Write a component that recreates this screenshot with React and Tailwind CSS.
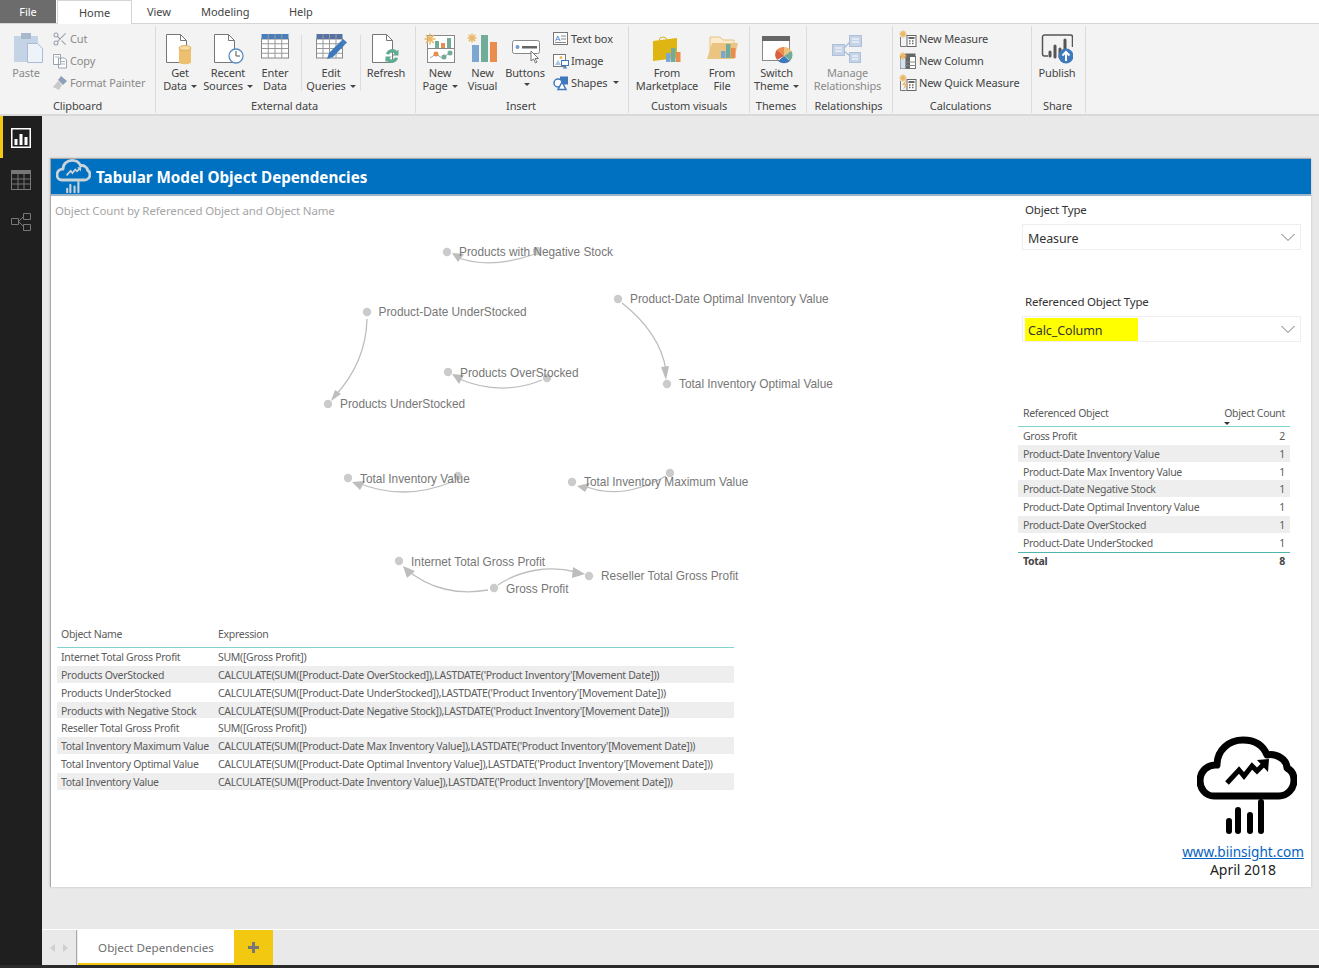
import { Scissors } from 'lucide-react';

const nodes = [
  { x: 447, y: 252, label: 'Products with Negative Stock', lx: 459, ly: 256 },
  { x: 537, y: 251 },
  { x: 367, y: 312, label: 'Product-Date UnderStocked', lx: 378.5, ly: 316 },
  { x: 328, y: 404, label: 'Products UnderStocked', lx: 340, ly: 408 },
  { x: 448, y: 372, label: 'Products OverStocked', lx: 460, ly: 377 },
  { x: 547, y: 378 },
  { x: 618, y: 299, label: 'Product-Date Optimal Inventory Value', lx: 630, ly: 303 },
  { x: 667, y: 384, label: 'Total Inventory Optimal Value', lx: 679, ly: 388 },
  { x: 348, y: 478, label: 'Total Inventory Value', lx: 360, ly: 483 },
  { x: 458, y: 476 },
  { x: 572, y: 482, label: 'Total Inventory Maximum Value', lx: 584, ly: 486 },
  { x: 670, y: 473 },
  { x: 399, y: 561, label: 'Internet Total Gross Profit', lx: 411, ly: 566 },
  { x: 589, y: 576, label: 'Reseller Total Gross Profit', lx: 601, ly: 580 },
  { x: 494, y: 588, label: 'Gross Profit', lx: 506, ly: 593 },
];

const edges = [
  { d: 'M535 254 Q490 270 456 257', head: '452,253 464,254 458,262' },
  { d: 'M367 319 Q366 362 335 396', head: '331,401 341,394 335,390' },
  { d: 'M542 380 Q500 397 457 378', head: '452,374 464,375 459,384' },
  { d: 'M622 303 Q660 333 666 370', head: '666,380 661,367 669,366' },
  { d: 'M454 481 Q405 502 358 483', head: '352,482 365,481 360,490' },
  { d: 'M666 476 Q620 502 582 485', head: '577,486 590,483 585,492' },
  { d: 'M488 590 C460 595 430 590 406 569', head: '403,566 415,571 407,578' },
  { d: 'M498 585 C520 570 550 565 576 572', head: '585,574 573,567 572,578' },
];

const expressions = [
  ['Internet Total Gross Profit', 'SUM([Gross Profit])'],
  ['Products OverStocked', "CALCULATE(SUM([Product-Date OverStocked]),LASTDATE('Product Inventory'[Movement Date]))"],
  ['Products UnderStocked', "CALCULATE(SUM([Product-Date UnderStocked]),LASTDATE('Product Inventory'[Movement Date]))"],
  ['Products with Negative Stock', "CALCULATE(SUM([Product-Date Negative Stock]),LASTDATE('Product Inventory'[Movement Date]))"],
  ['Reseller Total Gross Profit', 'SUM([Gross Profit])'],
  ['Total Inventory Maximum Value', "CALCULATE(SUM([Product-Date Max Inventory Value]),LASTDATE('Product Inventory'[Movement Date]))"],
  ['Total Inventory Optimal Value', "CALCULATE(SUM([Product-Date Optimal Inventory Value]),LASTDATE('Product Inventory'[Movement Date]))"],
  ['Total Inventory Value', "CALCULATE(SUM([Product-Date Inventory Value]),LASTDATE('Product Inventory'[Movement Date]))"],
];

const counts = [
  ['Gross Profit', 2],
  ['Product-Date Inventory Value', 1],
  ['Product-Date Max Inventory Value', 1],
  ['Product-Date Negative Stock', 1],
  ['Product-Date Optimal Inventory Value', 1],
  ['Product-Date OverStocked', 1],
  ['Product-Date UnderStocked', 1],
];

const Page = ({ children }) => (
  <>
    <path d="M2.5 1.5h14l6 6v22h-20z" fill="#fff" stroke="#777" />
    <path d="M16.5 1.5v6h6" fill="none" stroke="#777" />
    {children}
  </>
);

const Icon = ({ children, size = 32 }) => (
  <svg width={size} height={size} viewBox={`0 0 ${size} ${size}`} className="shrink-0">
    {children}
  </svg>
);

const Grid = ({ x, y, w, h, cols = 4, rows = 4, head = '#4a7ebb' }) => {
  const cw = w / cols;
  const rh = (h - 5) / rows;
  return (
    <>
      <rect x={x} y={y + 5} width={w} height={h - 5} fill="#fff" stroke="#888" />
      <rect x={x} y={y} width={w} height={5} fill={head} />
      {Array.from({ length: cols - 1 }, (_, i) => (
        <line key={i} x1={x + cw * (i + 1)} y1={y} x2={x + cw * (i + 1)} y2={y + h} stroke="#999" />
      ))}
      {Array.from({ length: rows - 1 }, (_, i) => (
        <line key={i} x1={x} y1={y + 5 + rh * (i + 1)} x2={x + w} y2={y + 5 + rh * (i + 1)} stroke="#999" />
      ))}
    </>
  );
};

const Sun = ({ x, y, r = 5 }) => (
  <g stroke="#eab765" strokeWidth="1.5">
    <line x1={x - r} y1={y} x2={x + r} y2={y} />
    <line x1={x} y1={y - r} x2={x} y2={y + r} />
    <line x1={x - r * 0.7} y1={y - r * 0.7} x2={x + r * 0.7} y2={y + r * 0.7} />
    <line x1={x - r * 0.7} y1={y + r * 0.7} x2={x + r * 0.7} y2={y - r * 0.7} />
  </g>
);

const Bars = ({ x, y }) => (
  <>
    <rect x={x} y={y + 7} width="4.5" height="7" fill="#7ba7d0" />
    <rect x={x + 5} y={y} width="4.5" height="14" fill="#71ac9a" />
    <rect x={x + 10} y={y + 4} width="4.5" height="10" fill="#e98c4c" />
  </>
);

const ribbonIcons = {
  getData: (
    <Icon>
      <Page />
      <path d="M15 15v14c0 3 12 3 12 0V15z" fill="#ecc06e" />
      <ellipse cx="21" cy="15" rx="6" ry="2.4" fill="#f6dda8" stroke="#dcae57" />
    </Icon>
  ),
  recent: (
    <Icon>
      <Page />
      <circle cx="24" cy="23" r="7" fill="#fff" stroke="#5b8bc0" strokeWidth="1.3" />
      <path d="M24 18v5h4" fill="none" stroke="#555" />
    </Icon>
  ),
  enter: (
    <Icon>
      <Grid x={2.5} y={1} w={27} h={24} />
    </Icon>
  ),
  edit: (
    <Icon>
      <Grid x={1.5} y={1} w={26} h={24} head="#5672a5" />
      <path d="M12 26l2-6L26 8l4 3.500L18 24z" fill="#3e79bd" />
      <path d="M26 8l2-2 4 3.500-2 2z" fill="#3e79bd" />
    </Icon>
  ),
  refresh: (
    <Icon>
      <Page />
      <path d="M16 21a6.500 6.500 0 0 1 11-3l1.500-1.500v6h-6l2-2a3.500 3.500 0 0 0-5.500 1z" fill="#60ab92" />
      <path d="M28 25a6.500 6.500 0 0 1-11 3l-1.500 1.500v-6h6l-2 2a3.500 3.500 0 0 0 5.500-1z" fill="#60ab92" />
    </Icon>
  ),
  newPage: (
    <Icon>
      <rect x="3.500" y="2.500" width="27" height="27" fill="#fff" stroke="#888" />
      <line x1="3.500" y1="15.500" x2="30.500" y2="15.500" stroke="#888" />
      <rect x="11" y="8" width="4" height="7" fill="#71ac9a" />
      <rect x="17" y="10" width="4" height="5" fill="#e98c4c" />
      <rect x="23" y="5" width="4" height="10" fill="#71ac9a" />
      <path d="M6 25l6-4 6 4 8-5" fill="none" stroke="#9aa" />
      <circle cx="12" cy="21" r="2.500" fill="#e98c4c" />
      <circle cx="20" cy="24" r="2.500" fill="#71ac9a" />
      <circle cx="26" cy="20" r="2.500" fill="#71ac9a" />
      <Sun x={6} y={6} r={5.500} />
    </Icon>
  ),
  newVisual: (
    <Icon>
      <rect x="5" y="12" width="7" height="17" fill="#7ba7d0" />
      <rect x="14" y="2" width="7" height="27" fill="#71ac9a" />
      <rect x="23" y="9" width="7" height="20" fill="#e98c4c" />
      <Sun x={5} y={5} r={4.500} />
    </Icon>
  ),
  buttons: (
    <Icon>
      <rect x="3.500" y="7.500" width="27" height="13" rx="2" fill="#fff" stroke="#888" />
      <circle cx="8.500" cy="14" r="2" fill="#6d9dd0" />
      <rect x="13" y="13" width="15" height="2.500" fill="#666" />
      <path d="M22 18v10l2.500-2 2 4 1.500-1-2-3.500h3.500z" fill="#fff" stroke="#777" />
    </Icon>
  ),
  textBox: (
    <Icon size={16}>
      <rect x="0.500" y="1.500" width="14" height="12" fill="#fff" stroke="#777" />
      <text x="2" y="10" fontSize="8" fill="#3e79bd" fontFamily="Liberation Sans">A</text>
      <path d="M8 5h5M8 8h5M2 11.500h11" stroke="#888" />
    </Icon>
  ),
  image: (
    <Icon size={16}>
      <rect x="0.500" y="1.500" width="12" height="12" fill="#fff" stroke="#777" />
      <circle cx="8" cy="4.500" r="1.500" fill="#eab765" />
      <path d="M2 12l3-5 3 5z" fill="#a9c6e3" />
      <rect x="8.500" y="7.500" width="7" height="5" fill="#fff" stroke="#3e79bd" />
      <path d="M10 15h4M12 13v2" stroke="#3e79bd" />
    </Icon>
  ),
  shapes: (
    <Icon size={16}>
      <rect x="7" y="1.500" width="8" height="8" fill="#3e79bd" />
      <circle cx="5" cy="8" r="4" fill="#fff" stroke="#3e79bd" strokeWidth="1.500" />
      <path d="M9 7l4 7.500H5z" fill="#fff" stroke="#3e79bd" strokeWidth="1.500" />
    </Icon>
  ),
  marketplace: (
    <Icon>
      <path d="M8 8a4 4 0 0 1 8 0" fill="none" stroke="#dbb315" />
      <path d="M2 8l24-3v20L2 28z" fill="#dfb513" />
      <rect x="15" y="20" width="4.500" height="9" fill="#7ba7d0" />
      <rect x="20" y="15" width="4.500" height="14" fill="#71ac9a" />
      <rect x="25" y="19" width="4.500" height="10" fill="#e98c4c" />
    </Icon>
  ),
  fromFile: (
    <Icon>
      <path d="M4 24V4h10l3 3h11v18z" fill="#fbeacb" stroke="#e8c285" />
      <path d="M1 26L6 10h26l-4 16z" fill="#ecc482" />
      <Bars x={15} y={11} />
    </Icon>
  ),
  theme: (
    <Icon>
      <rect x="1.500" y="3.500" width="27" height="24" fill="#fff" stroke="#888" />
      <rect x="1" y="3" width="28" height="5" fill="#666" />
      <path d="M23 14L23 23 16 16.500A9 9 0 0 1 23 14z" fill="#e98c4c" />
      <path d="M23 14a9 9 0 0 1 7.500 4L23 23z" fill="#eec27a" />
      <path d="M30.500 18a9 9 0 0 1-1 9.500L23 23z" fill="#71ac9a" />
      <path d="M29 28a9 9 0 0 1-12 0l6-5z" fill="#3e79bd" />
      <path d="M16 27a9 9 0 0 1 0-10.500L23 23z" fill="#d9603f" />
    </Icon>
  ),
  manage: (
    <Icon>
      <g fill="#c5d3e6" stroke="#aebfd8">
        <rect x="0.500" y="11.500" width="12" height="11" />
        <rect x="17.500" y="2.500" width="12" height="11" />
        <rect x="17.500" y="19.500" width="11" height="10" />
      </g>
      <path d="M3 15h7M3 18h7M20 6h7M20 9h7M20 23h6M20 26h6" stroke="#fff" />
      <path d="M12 15l6-6M12 18l6 5" stroke="#aebfd8" strokeWidth="1.500" />
    </Icon>
  ),
  measure: (
    <Icon size={18}>
      <path d="M1.500 7v9.500h6" fill="none" stroke="#777" />
      <rect x="8" y="5.500" width="9" height="11" fill="#fff" stroke="#666" />
      <rect x="9.500" y="7" width="6" height="2" fill="#666" />
      <path d="M10 11h1.500M13 11h1.500M10 13.500h1.500M13 13.500h1.500" stroke="#666" strokeWidth="1.300" />
      <Sun x={4} y={4} r={3.500} />
    </Icon>
  ),
  column: (
    <Icon size={18}>
      <rect x="1.500" y="4.500" width="15" height="12" fill="#fff" stroke="#777" />
      <rect x="6" y="1.500" width="5" height="15" fill="#666" />
      <rect x="1.500" y="7" width="5" height="9.500" fill="#d3e2f2" />
      <rect x="11" y="1.500" width="5.500" height="3.500" fill="#666" />
      <path d="M6 10h11M6 13.500h11" stroke="#888" />
      <Sun x={4} y={4} r={3.500} />
    </Icon>
  ),
  quick: (
    <Icon size={18}>
      <path d="M1.500 7v9.500h6" fill="none" stroke="#777" />
      <rect x="8" y="5.500" width="9" height="11" fill="#fff" stroke="#666" />
      <rect x="9.500" y="7" width="6" height="2" fill="#666" />
      <path d="M10 11h1.500M13 11h1.500M10 13.500h1.500M13 13.500h1.500" stroke="#666" strokeWidth="1.300" />
      <path d="M7 6L3 11h3l-2 5 5-6H6z" fill="#eab765" />
      <Sun x={4} y={4} r={3.500} />
    </Icon>
  ),
  publish: (
    <Icon>
      <path d="M7 23H3.500a2 2 0 0 1-2-2V4a2 2 0 0 1 2-2h26a2 2 0 0 1 2 2v10" fill="none" stroke="#555" strokeWidth="1.500" />
      <g stroke="#555" strokeWidth="3" strokeLinecap="round">
        <line x1="9" y1="19" x2="9" y2="23" />
        <line x1="14" y1="13" x2="14" y2="24" />
        <line x1="19" y1="16" x2="19" y2="24" />
        <line x1="24" y1="7" x2="24" y2="16" />
      </g>
      <circle cx="25" cy="23" r="7.500" fill="#3e79bd" />
      <path d="M25 28v-9M21.500 22.500l3.500-3.500 3.500 3.500" fill="none" stroke="#fff" strokeWidth="2" />
    </Icon>
  ),
};

const Caret = () => <span className="inline-block ml-[4px] mb-[2px] border-x-[3px] border-x-transparent border-t-[3px] border-t-[#444]" />;

const BigButton = ({ icon, lines, w, caret, dim, nobreak }) => (
  <div className={`flex flex-col items-center shrink-0 ${w} ${dim ? 'text-[#8a8a8a]' : 'text-[#444]'}`}>
    <div className="h-[34px] flex items-start justify-center pt-[1px]">{icon}</div>
    <div className="text-[11px] tracking-[-0.15px] leading-[13px] text-center whitespace-nowrap">
      <div>{lines[0]}</div>
      {lines[1] !== undefined && <div>{lines[1]}{caret && <Caret />}</div>}
      {nobreak && <div className="h-[13px] flex items-center justify-center"><Caret /></div>}
    </div>
  </div>
);

const SmallButton = ({ icon, text, dim, caret }) => (
  <div className={`h-[22px] flex items-center gap-[2px] whitespace-nowrap text-[11px] tracking-[-0.15px] ${dim ? 'text-[#8a8a8a]' : 'text-[#444]'}`}>
    {icon}
    <span>{text}</span>
    {caret && <Caret />}
  </div>
);

const Group = ({ label, w, children, pad = '', labelClass = '' }) => (
  <div className={`flex flex-col shrink-0 border-r border-[#dcdcdc] mt-[2px] mb-[1px] ${w}`}>
    <div className={`flex flex-1 min-h-0 pt-[6px] ${pad}`}>{children}</div>
    <div className={`h-[14px] text-[11px] tracking-[-0.1px] leading-[14px] text-[#444] text-center ${labelClass}`}>{label}</div>
  </div>
);

const Sep = () => <div className="w-px h-[56px] mt-[3px] bg-[#dcdcdc] shrink-0" />;

const Ribbon = () => (
  <div className="h-[92px] bg-[#f3f3f3] border-b-2 border-[#d9d9d9] flex items-stretch">
    <Group label="Clipboard" w="w-[156px]">
      <div className="w-[52px] flex flex-col items-center text-[#8a8a8a] shrink-0">
        <div className="h-[34px] pl-[5px]">
          <Icon>
            <rect x="1" y="4" width="24" height="26" fill="#c5d3e6" />
            <rect x="8" y="1" width="10" height="6" fill="#a9b8cc" />
            <path d="M14.500 11.500h10l5 5v14h-15z" fill="#eef3f9" stroke="#a9bdd8" />
          </Icon>
        </div>
        <div className="text-[11px] tracking-[-0.15px] leading-[13px]">Paste</div>
      </div>
      <div className="flex flex-col -mt-[4px]">
        <SmallButton dim text="Cut" icon={<Scissors size={16} strokeWidth={1.6} className="text-[#9aa3ad]" />} />
        <SmallButton
          dim
          text="Copy"
          icon={
            <Icon size={16}>
              <path d="M1.500 1.500h7v10h-7zM6.500 5h6l2 2v8h-8z" fill="#fff" stroke="#9aa3ad" />
              <path d="M8 8.500h5M8 11h5M3 4h4" stroke="#a9b4c2" />
            </Icon>
          }
        />
        <SmallButton
          dim
          text="Format Painter"
          icon={
            <Icon size={16}>
              <path d="M9 1l6 5-4 4-5-5z" fill="#8ea0b8" />
              <path d="M6 6l4 4-3 5-6-3z" fill="#c9c9c9" />
            </Icon>
          }
        />
      </div>
    </Group>
    <Group label="External data" w="w-[260px]" labelClass="pr-[2px]">
      <BigButton w="w-[48px]" icon={ribbonIcons.getData} lines={['Get', 'Data']} caret />
      <BigButton w="w-[48px]" icon={ribbonIcons.recent} lines={['Recent', 'Sources']} caret />
      <BigButton w="w-[46px]" icon={ribbonIcons.enter} lines={['Enter', 'Data']} />
      <div className="w-[3px]" />
      <Sep />
      <BigButton w="w-[58px]" icon={ribbonIcons.edit} lines={['Edit', 'Queries']} caret />
      <Sep />
      <BigButton w="w-[50px]" icon={ribbonIcons.refresh} lines={['Refresh']} />
    </Group>
    <Group label="Insert" w="w-[213px]" labelClass="pr-[2px]">
      <BigButton w="w-[48px]" icon={ribbonIcons.newPage} lines={['New', 'Page']} caret />
      <BigButton w="w-[37px]" icon={ribbonIcons.newVisual} lines={['New', 'Visual']} />
      <BigButton w="w-[48px]" icon={ribbonIcons.buttons} lines={['Buttons']} nobreak />
      <div className="flex flex-col -mt-[4px] ml-[4px]">
        <SmallButton text="Text box" icon={ribbonIcons.textBox} />
        <SmallButton text="Image" icon={ribbonIcons.image} />
        <SmallButton text="Shapes" icon={ribbonIcons.shapes} caret />
      </div>
    </Group>
    <Group label="Custom visuals" w="w-[121px]" pad="pl-[4px]">
      <BigButton w="w-[68px]" icon={ribbonIcons.marketplace} lines={['From', 'Marketplace']} />
      <BigButton w="w-[42px]" icon={ribbonIcons.fromFile} lines={['From', 'File']} />
    </Group>
    <Group label="Themes" w="w-[57px]" labelClass="pr-[4px]">
      <BigButton w="w-[53px]" icon={ribbonIcons.theme} lines={['Switch', 'Theme']} caret />
    </Group>
    <Group label="Relationships" w="w-[86px]" labelClass="pr-[2px]">
      <BigButton dim w="w-[81px]" icon={ribbonIcons.manage} lines={['Manage', 'Relationships']} />
    </Group>
    <Group label="Calculations" w="w-[139px]" pad="pl-[6px]" labelClass="pr-[3px]">
      <div className="flex flex-col -mt-[4px]">
        <SmallButton text="New Measure" icon={ribbonIcons.measure} />
        <SmallButton text="New Column" icon={ribbonIcons.column} />
        <SmallButton text="New Quick Measure" icon={ribbonIcons.quick} />
      </div>
    </Group>
    <Group label="Share" w="w-[54px]" labelClass="pr-[2px]">
      <BigButton w="w-[50px]" icon={ribbonIcons.publish} lines={['Publish']} />
    </Group>
  </div>
);

const TopTabs = () => (
  <div className="h-[24px] bg-white border-b border-[#d5d5d5] flex text-[11px] tracking-[-0.05px] text-[#444]">
    <div className="w-[56px] bg-[#6c6c6c] text-white flex items-center justify-center pt-[1px]">File</div>
    <div className="w-[75px] ml-px h-[24px] bg-white border border-b-0 border-[#d5d5d5] flex items-center justify-center pt-[1px]">Home</div>
    <div className="pl-[15px] w-[69px] flex items-center pt-[1px]">View</div>
    <div className="w-[88px] flex items-center pt-[1px]">Modeling</div>
    <div className="flex items-center pt-[1px]">Help</div>
  </div>
);

const Sidebar = () => (
  <div className="w-[42px] bg-[#1f1f1f] shrink-0 flex flex-col">
    <div className="h-[42px] border-l-[3px] border-[#f2c811] flex items-center justify-center pr-[3px] pt-[2px]">
      <svg width="20" height="20" viewBox="0 0 20 20">
        <rect x="0.750" y="0.750" width="18.500" height="18.500" fill="none" stroke="#fff" strokeWidth="1.500" />
        <path d="M3.500 11h3v6h-3zM8.500 6h3v11h-3zM13.500 9h3v8h-3z" fill="#fff" />
      </svg>
    </div>
    <div className="h-[42px] flex items-center justify-center pt-[2px]">
      <svg width="20" height="20" viewBox="0 0 20 20">
        <rect x="0.500" y="0.500" width="19" height="19" fill="none" stroke="#777" />
        <rect x="0" y="0" width="20" height="4" fill="#777" />
        <path d="M7 4v15M13 4v15M1 9h18M1 14h18" stroke="#777" />
      </svg>
    </div>
    <div className="h-[42px] flex items-center justify-center pt-[2px]">
      <svg width="20" height="18" viewBox="0 0 20 18">
        <path d="M.5 5.500h7v6h-7zM12.500 .5h7v6h-7zM12.500 11.500h7v6h-7zM8 8l4-4M8 9l4 4" fill="none" stroke="#777" />
      </svg>
    </div>
  </div>
);

const Cloud = ({ color = '#000', width = 100, sw = 7 }) => (
  <svg width={width} height={width} viewBox="0 0 100 100" className="block">
    <path
      d="M17 60C8 60 3 52 3 45C3 35 11 28 20 29C20 14 32 4 46 4C58 4 66 9 70 19C80 17 90 24 90 32C94 34 97 38 97 44C97 53 90 60 82 60Z"
      fill="none"
      stroke={color}
      strokeWidth={sw}
      strokeLinejoin="round"
    />
    <path d="M30 47L42 34L47 40L55 30L60 35L68 27" fill="none" stroke={color} strokeWidth="5" />
    <path d="M60 24L72 23L71 36Z" fill={color} />
    <g stroke={color} strokeWidth="6" strokeLinecap="round">
      <line x1="32" y1="85" x2="32" y2="95" />
      <line x1="41" y1="74" x2="41" y2="95" />
      <line x1="53" y1="79" x2="53" y2="95" />
      <line x1="64" y1="66" x2="64" y2="95" />
    </g>
  </svg>
);

const Graph = () => (
  <svg width="800" height="395" viewBox="51 225 800 395" className="block mt-[6px]">
    {edges.map((e, i) => (
      <g key={i}>
        <path d={e.d} fill="none" stroke="#bdbdbd" strokeWidth="1.300" />
        <polygon points={e.head} fill="#bdbdbd" />
      </g>
    ))}
    {nodes.map((n, i) => (
      <circle key={i} cx={n.x} cy={n.y} r="4.200" fill="#cbcbcb" />
    ))}
    {nodes.filter((n) => n.label).map((n) => (
      <text key={n.label} x={n.lx} y={n.ly} fontSize="11.850" fill="#777" fontFamily="Liberation Sans, sans-serif">
        {n.label}
      </text>
    ))}
  </svg>
);

const ExpressionTable = () => (
  <div className="ml-[6px] w-[677px] text-[10.500px] tracking-[-0.3px] text-[#5c5c5c]">
    <div className="h-[28px] flex items-center border-b border-[#7fd4cb] pt-[3px]">
      <div className="w-[161px] pl-[4px] shrink-0">Object Name</div>
      <div>Expression</div>
    </div>
    {expressions.map(([name, expr], i) => (
      <div key={name} className={`h-[17.850px] flex items-center whitespace-nowrap border-b border-white pt-[3px] ${i % 2 ? 'bg-[#eeeeee]' : ''}`}>
        <div className="w-[161px] pl-[4px] shrink-0">{name}</div>
        <div>{expr}</div>
      </div>
    ))}
  </div>
);

const Slicer = ({ label, value, mark, className = '' }) => (
  <div className={className}>
    <div className="h-[14px] pl-[7px] text-[11.500px] tracking-[-0.2px] leading-[14px] text-[#333]">{label}</div>
    <div className="mt-[7px] ml-[4px] w-[279px] h-[26px] border border-[#eeeeee] flex items-center justify-between pl-[2px] pr-[4px] text-[12.500px] tracking-[-0.1px] text-[#333]">
      <span className={`h-[23px] flex items-center pl-[3px] pt-[5px] ${mark ? 'w-[113px] bg-[#ffff00]' : ''}`}>{value}</span>
      <svg width="16" height="9" viewBox="0 0 16 9">
        <path d="M1.500 1l6.500 6.500L14.500 1" fill="none" stroke="#777" />
      </svg>
    </div>
  </div>
);

const CountTable = () => (
  <div className="mt-[63px] w-[272px] text-[10.500px] tracking-[-0.32px] text-[#5c5c5c]">
    <div className="h-[22px] flex justify-between border-b border-[#7fd4cb] px-[5px] relative">
      <span className="leading-[16px]">Referenced Object</span>
      <span className="leading-[16px]">Object Count</span>
      <span className="absolute left-[206px] bottom-[1px] border-x-[3px] border-x-transparent border-t-[3px] border-t-[#333]" />
    </div>
    {counts.map(([name, n], i) => (
      <div key={name} className={`h-[17.800px] flex items-center justify-between px-[5px] border-b border-white pt-[3px] ${i % 2 ? 'bg-[#eeeeee]' : ''}`}>
        <span>{name}</span>
        <span>{n}</span>
      </div>
    ))}
    <div className="h-[20px] border-t border-[#4fb5ab] flex items-center justify-between px-[5px] font-bold text-[#444]">
      <span>Total</span>
      <span>8</span>
    </div>
  </div>
);

const ReportPage = () => (
  <div className="w-[1261px] h-[729px] bg-white border-t border-l border-[#a8a8a8] flex flex-col shadow-[0_0_2px_#bbb]">
    <div className="h-[37px] bg-[#0070c0] border-b-2 border-[#9fb4c4] flex items-center pl-[5px] shrink-0">
      <Cloud color="#c9d3d8" width={35} sw={8} />
      <span className="ml-[5px] pt-[1px] text-[15.200px] font-bold text-white whitespace-nowrap">Tabular Model Object Dependencies</span>
    </div>
    <div className="flex flex-1 min-h-0">
      <div className="w-[967px] shrink-0">
        <div className="mt-[7px] h-[16px] pl-[4px] text-[11.500px] tracking-[-0.13px] leading-[16px] text-[#a6a6a6]">
          Object Count by Referenced Object and Object Name
        </div>
        <Graph />
        <ExpressionTable />
      </div>
      <div className="flex-1 flex flex-col pt-[7px]">
        <Slicer label="Object Type" value="Measure" />
        <Slicer label="Referenced Object Type" value="Calc_Column" mark className="mt-[45px]" />
        <CountTable />
        <div className="mt-auto mb-[9px] ml-[164px] w-[122px] flex flex-col items-center">
          <div className="pl-[8px]">
            <Cloud />
          </div>
          <a className="mt-[7px] text-[13.600px] leading-[17px] text-[#0563c1] underline whitespace-nowrap">www.biinsight.com</a>
          <div className="mt-[1px] text-[14px] leading-[17px] text-[#222]">April 2018</div>
        </div>
      </div>
    </div>
  </div>
);

const BottomBar = () => (
  <div className="h-[36px] bg-[#e9e9e9] border-t border-white flex">
    <div className="w-[34px] flex items-center justify-center gap-[8px] shrink-0 pt-[1px]">
      <span className="border-y-[4px] border-y-transparent border-r-[5px] border-r-[#cfcfcf]" />
      <span className="border-y-[4px] border-y-transparent border-l-[5px] border-l-[#cfcfcf]" />
    </div>
    <div className="w-px bg-[#aaaaaa] shrink-0" />
    <div className="ml-px w-[156px] bg-white border-b-2 border-[#f2c811] flex items-center justify-center pt-[2px] text-[11.600px] text-[#6f6f6f]">
      Object Dependencies
    </div>
    <div className="w-[39px] bg-[#f2c811] flex items-center justify-center">
      <svg width="11" height="11" viewBox="0 0 11 11">
        <path d="M4 0h3v4h4v3H7v4H4V7H0V4h4z" fill="#777" />
      </svg>
    </div>
  </div>
);

export default function App() {
  return (
    <div className="w-[1319px] h-[968px] flex flex-col overflow-hidden bg-[#e9e9e9] font-['Noto_Sans',sans-serif]">
      <TopTabs />
      <Ribbon />
      <div className="flex-1 flex min-h-0">
        <Sidebar />
        <div className="flex-1 flex flex-col min-w-0">
          <div className="flex-1 pl-[8px] pt-[42px]">
            <ReportPage />
          </div>
          <BottomBar />
        </div>
      </div>
      <div className="h-[3px] bg-[#2b2b2b]" />
    </div>
  );
}
